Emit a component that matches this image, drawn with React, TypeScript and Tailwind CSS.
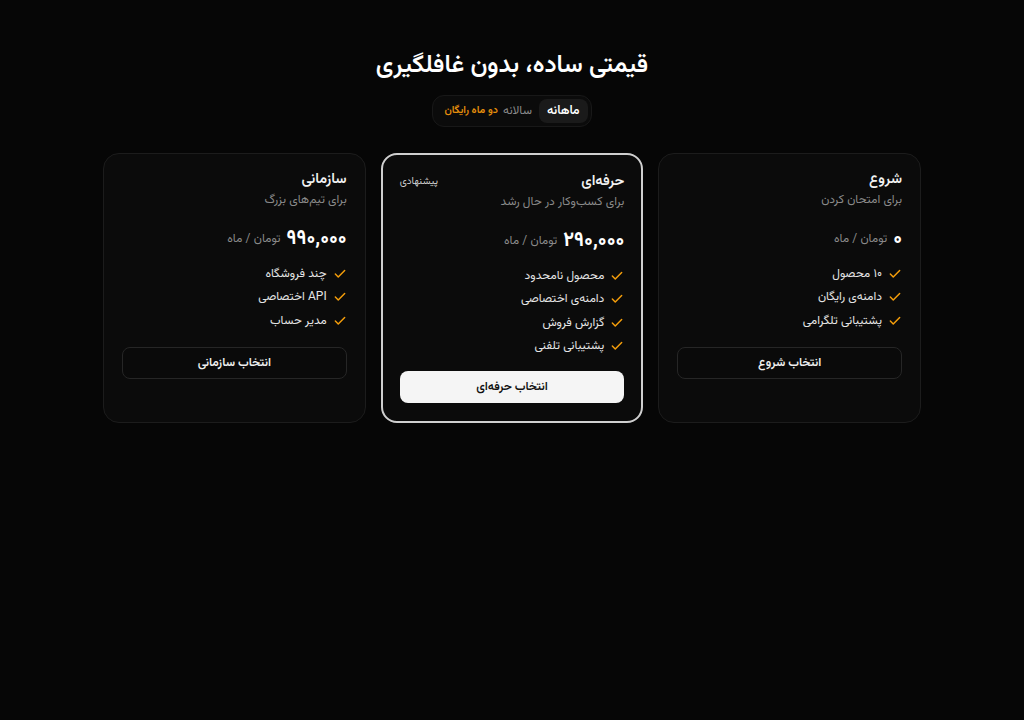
import React from "react";

const FONT = { fontFamily: '"Vazirmatn", "Vazir", "Noto Sans Arabic", "Noto Naskh Arabic", "DejaVu Sans", sans-serif' };

function Check() {
  return (
    <svg width="14" height="14" viewBox="0 0 24 24" fill="none" stroke="#f59e0b" strokeWidth="2.5" strokeLinecap="round" strokeLinejoin="round" className="shrink-0">
      <path d="M20 6 9 17l-5-5" />
    </svg>
  );
}

type Plan = {
  name: string;
  desc: string;
  price: string;
  features: string[];
  cta: string;
  featured?: boolean;
};

const plans: Plan[] = [
  {
    name: "شروع",
    desc: "برای امتحان کردن",
    price: "۰",
    features: ["۱۰ محصول", "دامنه‌ی رایگان", "پشتیبانی تلگرامی"],
    cta: "انتخاب شروع",
  },
  {
    name: "حرفه‌ای",
    desc: "برای کسب‌وکار در حال رشد",
    price: "۲۹۰,۰۰۰",
    features: ["محصول نامحدود", "دامنه‌ی اختصاصی", "گزارش فروش", "پشتیبانی تلفنی"],
    cta: "انتخاب حرفه‌ای",
    featured: true,
  },
  {
    name: "سازمانی",
    desc: "برای تیم‌های بزرگ",
    price: "۹۹۰,۰۰۰",
    features: ["چند فروشگاه", "API اختصاصی", "مدیر حساب"],
    cta: "انتخاب سازمانی",
  },
];

function Card({ p }: { p: Plan }) {
  return (
    <div
      className={
        p.featured
          ? "rounded-2xl border-2 border-[#cfcfcf] bg-[#0b0b0b] px-[17px] pt-[15px] pb-[18px] flex flex-col"
          : "rounded-2xl border border-[#1c1c1c] bg-[#0b0b0b] px-[18px] pt-[14px] pb-5 flex flex-col"
      }
    >
      <div className="flex items-start justify-between">
        <div className="flex flex-col">
          <div className="text-[14.5px] font-semibold text-[#f2f2f2] leading-[24px]">{p.name}</div>
          <div className="text-[12px] text-[#8a8a8a] leading-[16px]">{p.desc}</div>
        </div>
        {p.featured && <div className="text-[10px] text-[#d0d0d0] leading-[24px]">پیشنهادی</div>}
      </div>
      <div className="mt-[18px] flex items-center gap-1.5 h-[26px]">
        <span className="text-[20px] font-bold text-white leading-none">{p.price}</span>
        <span className="text-[12px] text-[#8a8a8a]">تومان / ماه</span>
      </div>
      <ul className="mt-[10px] flex flex-col">
        {p.features.map((f) => (
          <li key={f} className="flex items-center gap-1.5 h-[23.5px] text-[12px] text-[#e5e5e5]">
            <Check />
            <span>{f}</span>
          </li>
        ))}
      </ul>
      <button
        className={
          p.featured
            ? "mt-[13px] h-[32px] rounded-lg bg-[#f5f5f5] text-[#111] text-[12px] font-semibold"
            : "mt-[14px] h-[32px] rounded-lg border border-[#262626] bg-[#0a0a0a] text-[#f0f0f0] text-[12px] font-semibold"
        }
        style={FONT}
      >
        {p.cta}
      </button>
    </div>
  );
}

export default function App() {
  return (
    <div dir="rtl" className="min-h-[720px] w-full bg-[#060606] flex flex-col items-center pt-[46px]" style={FONT}>
      <h1 className="text-[24.5px] font-semibold text-white leading-[40px]">قیمتی ساده، بدون غافلگیری</h1>
      <div className="mt-[9px] flex items-center rounded-xl border border-[#181818] bg-[#0b0b0b] p-[3px] pl-[11px]">
        <div className="rounded-lg bg-[#1a1a1a] px-[8px] h-[24px] flex items-center text-[12.5px] font-semibold text-white">ماهانه</div>
        <div className="mr-[7px] text-[12px] text-[#8a8a8a]">سالانه</div>
        <div className="mr-[5px] text-[10.5px] font-semibold text-[#e8900c]">دو ماه رایگان</div>
      </div>
      <div className="mt-[26px] w-[818px] grid grid-cols-3 gap-[15px]">
        {plans.map((p) => (
          <Card key={p.name} p={p} />
        ))}
      </div>
    </div>
  );
}
